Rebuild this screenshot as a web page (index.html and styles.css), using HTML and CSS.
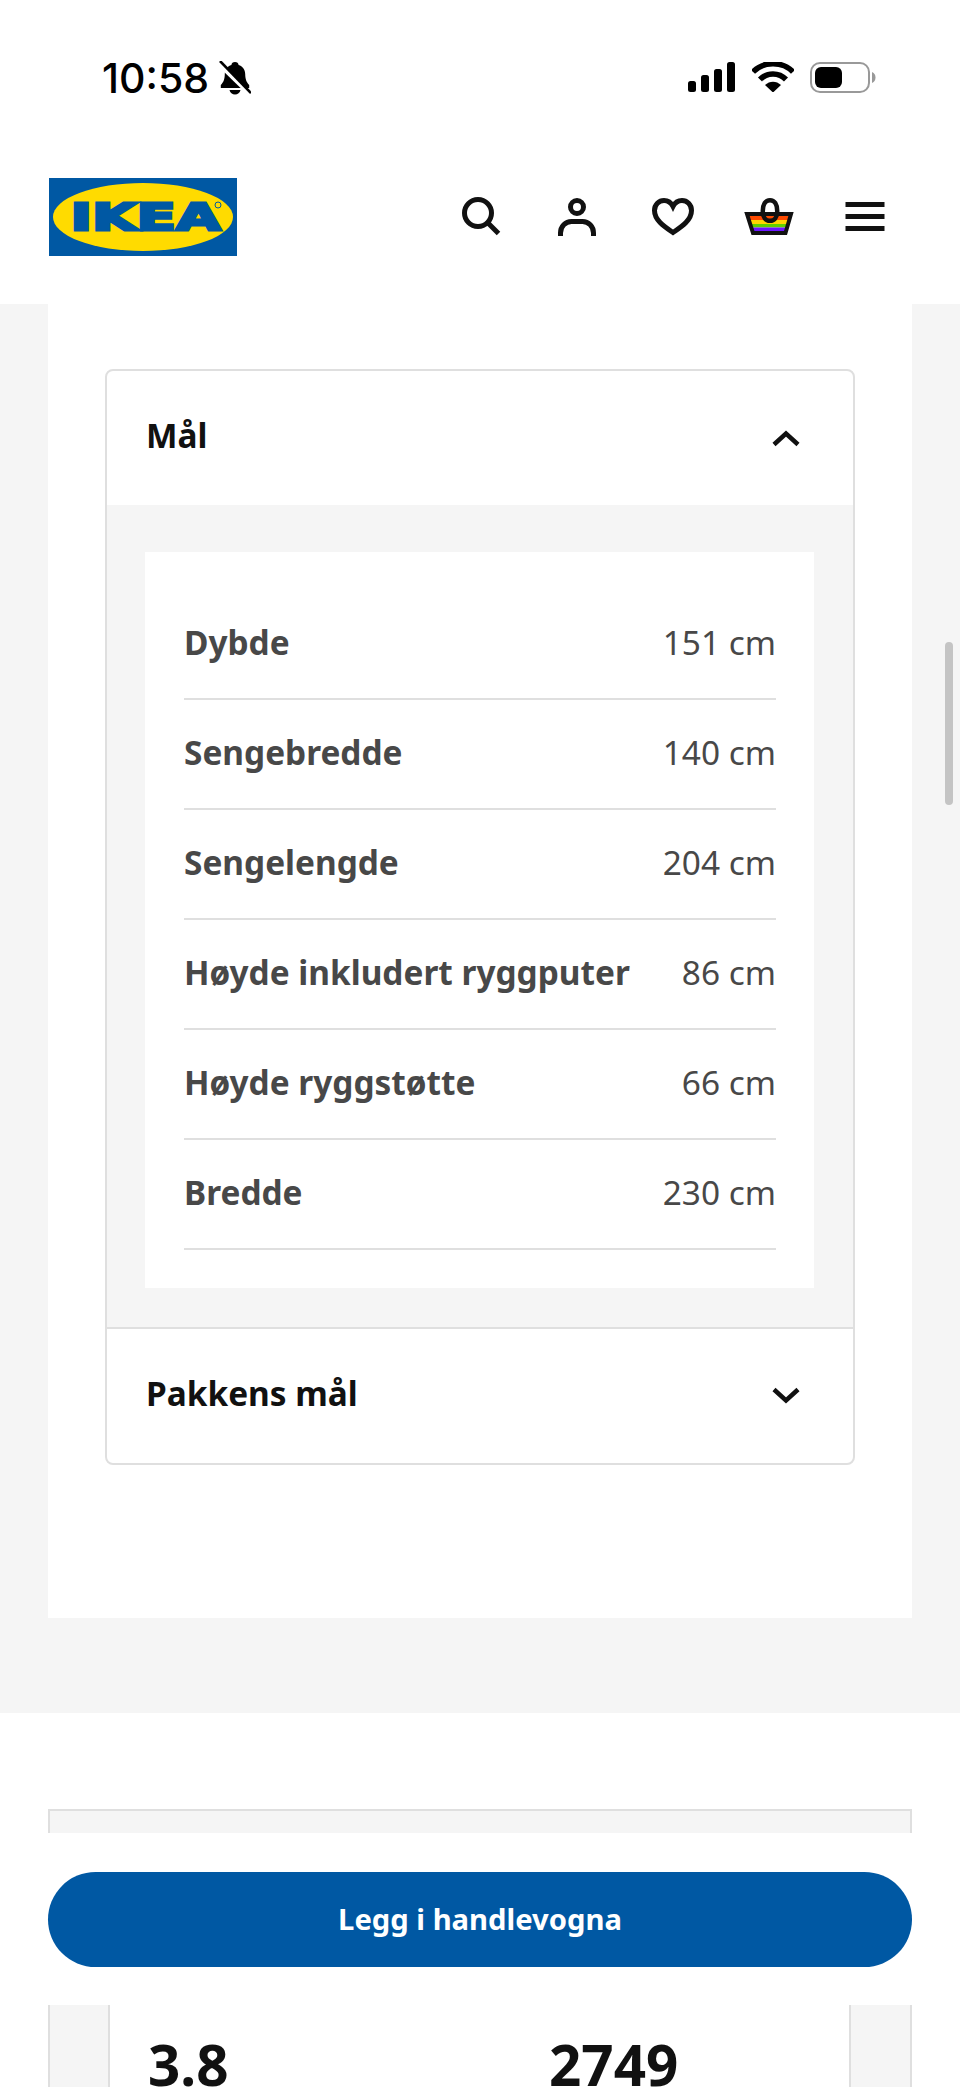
FILE: index.html
```html
<!DOCTYPE html>
<html lang="no">
<head>
    <meta charset="UTF-8">
    <title>IKEA - Mål</title>
    <link rel="stylesheet" href="styles.css">
</head>
<body>
    <div class="statusbar">
        <div class="klokke">
            <span>10:58</span>
            <svg class="bjelle" viewBox="0 0 32 34" width="32" height="34">
                <path d="M16 1c2.200 0 3.400 1.200 3.600 3 4 1.200 6.400 4.500 6.600 9 .1 5.500 1.300 8 4 11v3H1.800v-3c2.700-3 3.900-5.500 4-11 .2-4.500 2.600-7.800 6.600-9C12.600 2.200 13.800 1 16 1z" fill="#000"/>
                <path d="M10.500 29h11c-.6 2.800-2.800 4.500-5.500 4.500s-4.900-1.700-5.500-4.500z" fill="#000"/>
                <path d="M-1 2l32 31" stroke="#fff" stroke-width="4.500"/>
                <path d="M1 0l31 32" stroke="#000" stroke-width="2.600"/>
            </svg>
        </div>
        <div class="status-ikoner">
            <svg viewBox="0 0 48 30" width="48" height="30">
                <rect x="0" y="19" width="8" height="11" rx="2.500"/>
                <rect x="13" y="13" width="8" height="17" rx="2.500"/>
                <rect x="26" y="7" width="8" height="23" rx="2.500"/>
                <rect x="39" y="0" width="8" height="30" rx="2.500"/>
            </svg>
            <svg viewBox="0 0 42 30" width="42" height="30">
                <path d="M1 10C11-1 31-1 41 10" fill="none" stroke="#000" stroke-width="5.500"/>
                <path d="M8 17.500c7-7.500 19-7.500 26 0" fill="none" stroke="#000" stroke-width="5.500"/>
                <path d="M13 23c4.500-4.500 11.500-4.500 16 0l-8 7.500z"/>
            </svg>
            <svg viewBox="0 0 66 32" width="66" height="32">
                <rect x="1" y="1" width="58" height="29" rx="9" fill="none" stroke="#999" stroke-width="2"/>
                <rect x="5" y="5" width="27" height="21" rx="6"/>
                <path d="M62 10c2.500 1 3.500 3 3.500 5.500S64.500 20 62 21z" fill="#999"/>
            </svg>
        </div>
    </div>

    <header class="topp">
        <svg class="logo" viewBox="0 0 188 78" width="188" height="78">
            <rect width="188" height="78" fill="#0058a3"/>
            <ellipse cx="94" cy="39" rx="90" ry="34" fill="#ffdb00"/>
            <text class="logo-tekst" x="21.500" y="52" textLength="150" lengthAdjust="spacingAndGlyphs">IKEA</text>
            <circle cx="169" cy="27" r="3" fill="none" stroke="#0058a3"/>
        </svg>
        <nav class="ikoner">
            <span class="ikon">
                <svg viewBox="0 0 40 40" width="40" height="40">
                    <circle cx="17" cy="16" r="13.500" fill="none" stroke="#111" stroke-width="5"/>
                    <path d="M26 25l11.500 11.500" stroke="#111" stroke-width="5"/>
                </svg>
            </span>
            <span class="ikon">
                <svg viewBox="0 0 40 40" width="40" height="40">
                    <circle cx="20" cy="10" r="6.500" fill="none" stroke="#111" stroke-width="5"/>
                    <path d="M3.500 39v-3c0-6.500 5-11.500 11-11.500h11c6 0 11 5 11 11.500v3" fill="none" stroke="#111" stroke-width="5"/>
                </svg>
            </span>
            <span class="ikon">
                <svg viewBox="0 0 44 40" width="44" height="40">
                    <path d="M22 35.500C14 30 3.500 23.500 3.500 13.500 3.500 7.500 8 3.500 13 3.500c4 0 7 2 9 6 2-4 5-6 9-6 5 0 9.500 4 9.500 10C40.500 23.500 30 30 22 35.500z" fill="none" stroke="#111" stroke-width="5"/>
                </svg>
            </span>
            <span class="ikon">
                <svg viewBox="0 0 50 40" width="50" height="40">
                    <clipPath id="kurv"><path d="M2 17h46l-6 20H8z"/></clipPath>
                    <g clip-path="url(#kurv)">
                        <rect x="0" y="17" width="50" height="6" fill="#ff4a00"/>
                        <rect x="0" y="23" width="50" height="4" fill="#ffd400"/>
                        <rect x="0" y="27" width="50" height="3.500" fill="#5fd000"/>
                        <rect x="0" y="30.500" width="50" height="6.500" fill="#6a14ff"/>
                    </g>
                    <path d="M3 17h44l-5.500 19H9z" fill="none" stroke="#111" stroke-width="4"/>
                    <path d="M26 3.200c-4.500 0-7.250 4-7.250 11 0 6 3 9.600 7.250 9.600s7.250-3.600 7.250-9.600c0-7-2.750-11-7.250-11z" fill="none" stroke="#111" stroke-width="4.500"/>
                </svg>
            </span>
            <span class="ikon">
                <svg viewBox="0 0 40 40" width="40" height="40">
                    <rect x="0.500" y="5" width="39" height="5" fill="#111"/>
                    <rect x="0.500" y="17" width="39" height="5" fill="#111"/>
                    <rect x="0.500" y="29" width="39" height="5" fill="#111"/>
                </svg>
            </span>
        </nav>
    </header>

    <main class="graa">
        <section class="kort">
            <div class="trekkspill">
                <div class="trekk-hode">
                    <h2>Mål</h2>
                    <svg class="pil" viewBox="0 0 28 18" width="28" height="18"><path d="M2 15.500L14 4.500l12 11" fill="none" stroke="#111" stroke-width="4.500"/></svg>
                </div>
                <div class="trekk-innhold">
                    <dl class="maal">
                        <div class="rad"><dt>Dybde</dt><dd>151 cm</dd></div>
                        <div class="rad"><dt>Sengebredde</dt><dd>140 cm</dd></div>
                        <div class="rad"><dt>Sengelengde</dt><dd>204 cm</dd></div>
                        <div class="rad"><dt>Høyde inkludert ryggputer</dt><dd>86 cm</dd></div>
                        <div class="rad"><dt>Høyde ryggstøtte</dt><dd>66 cm</dd></div>
                        <div class="rad"><dt>Bredde</dt><dd>230 cm</dd></div>
                    </dl>
                </div>
                <div class="trekk-hode lukket">
                    <h2>Pakkens mål</h2>
                    <svg class="pil" viewBox="0 0 28 18" width="28" height="18"><path d="M2 2.500l12 11 12-11" fill="none" stroke="#111" stroke-width="4.500"/></svg>
                </div>
            </div>
        </section>
    </main>

    <section class="neste">
        <div class="neste-boks">
            <div class="neste-indre">
                <p>3.8</p>
                <p>2749</p>
            </div>
        </div>
    </section>

    <div class="kjop-felt">
        <button class="kjop">Legg i handlevogna</button>
    </div>
    <div class="rullefelt"></div>
</body>
</html>
```

FILE: styles.css
```css
html, body {
    margin: 0;
    height: 2087px;
    overflow: hidden;
    background: #fff;
    font-family: "Noto Sans", sans-serif;
}

.statusbar {
    height: 160px;
    box-sizing: border-box;
    padding: 60px 84px 0 102px;
    display: flex;
    justify-content: space-between;
    align-items: flex-start;
}
.klokke {
    display: flex;
    align-items: center;
    gap: 10px;
    height: 36px;
    font-family: Inter, sans-serif;
    font-size: 41px;
    font-weight: 500;
    line-height: 36px;
    color: #000;
}
.status-ikoner {
    display: flex;
    align-items: flex-start;
    gap: 16px;
    padding-top: 2px;
}

.topp {
    height: 144px;
    box-sizing: border-box;
    padding: 18px 47px 0 49px;
    display: flex;
    justify-content: space-between;
    align-items: flex-start;
}
.logo-tekst {
    font-family: "DejaVu Sans", sans-serif;
    font-weight: bold;
    font-size: 38px;
    fill: #0058a3;
    stroke: #0058a3;
    stroke-width: 2.800;
}
.ikoner {
    display: grid;
    grid-template-columns: repeat(5, 96px);
    padding-top: 19px;
}
.ikon {
    display: flex;
    justify-content: center;
    height: 40px;
}

.graa {
    height: 1409px;
    background: #f5f5f5;
    padding: 0 48px;
}
.kort {
    height: 1314px;
    box-sizing: border-box;
    background: #fff;
    padding: 65px 57px 0 57px;
}
.trekkspill {
    border: 2px solid #dfdfdf;
    border-radius: 8px;
}
.trekk-hode {
    height: 134px;
    box-sizing: border-box;
    padding: 0 53px 0 39px;
    display: flex;
    justify-content: space-between;
    align-items: center;
}
.trekk-hode.lukket {
    border-top: 2px solid #dfdfdf;
    height: 136px;
}
.trekk-hode h2 {
    margin: 0 0 6px;
    font-size: 33.400px;
    font-weight: 700;
    color: #111;
}
.trekk-hode.lukket h2 {
    margin-bottom: 6px;
}
.trekk-innhold {
    background: #f5f5f5;
    padding: 47px 39px 39px 38px;
}
.maal {
    margin: 0;
    background: #fff;
    padding: 38px 38px 38px 39px;
}
.rad {
    height: 110px;
    box-sizing: border-box;
    padding-bottom: 5px;
    border-bottom: 2px solid #dfdfdf;
    display: flex;
    justify-content: space-between;
    align-items: center;
    font-size: 33.400px;
    color: #484848;
}
.rad dt {
    font-weight: 700;
}
.rad dd {
    margin: 0;
}

.neste {
    padding: 96px 48px 0;
}
.neste-boks {
    height: 400px;
    box-sizing: border-box;
    border: solid #dfdfdf;
    border-width: 2px 2px 0;
    background: #f5f5f5;
    padding-top: 80px;
}
.neste-indre {
    margin: 0 59px 0 58px;
    height: 320px;
    box-sizing: border-box;
    background: #fff;
    border: solid #dfdfdf;
    border-width: 0 2px;
    padding: 0 0 0 38px;
    display: grid;
    grid-template-columns: 401px 1fr;
}
.neste-indre p {
    margin: 0;
    padding-top: 136px;
    font-size: 56.500px;
    font-weight: 700;
    line-height: 76px;
    color: #111;
}

/* ligger over innholdet */
.kjop-felt {
    position: absolute;
    left: 48px;
    top: 1833px;
    width: 864px;
    height: 172px;
    background: #fff;
    display: flex;
    align-items: center;
}
.kjop {
    width: 100%;
    height: 95px;
    border: 0;
    border-radius: 48px;
    background: #0058a3;
    color: #fff;
    font-family: "Noto Sans", sans-serif;
    font-size: 29.200px;
    font-weight: 700;
}
.rullefelt {
    position: absolute;
    left: 945px;
    top: 642px;
    width: 8px;
    height: 163px;
    border-radius: 4px;
    background: #c4c4c4;
}
```
